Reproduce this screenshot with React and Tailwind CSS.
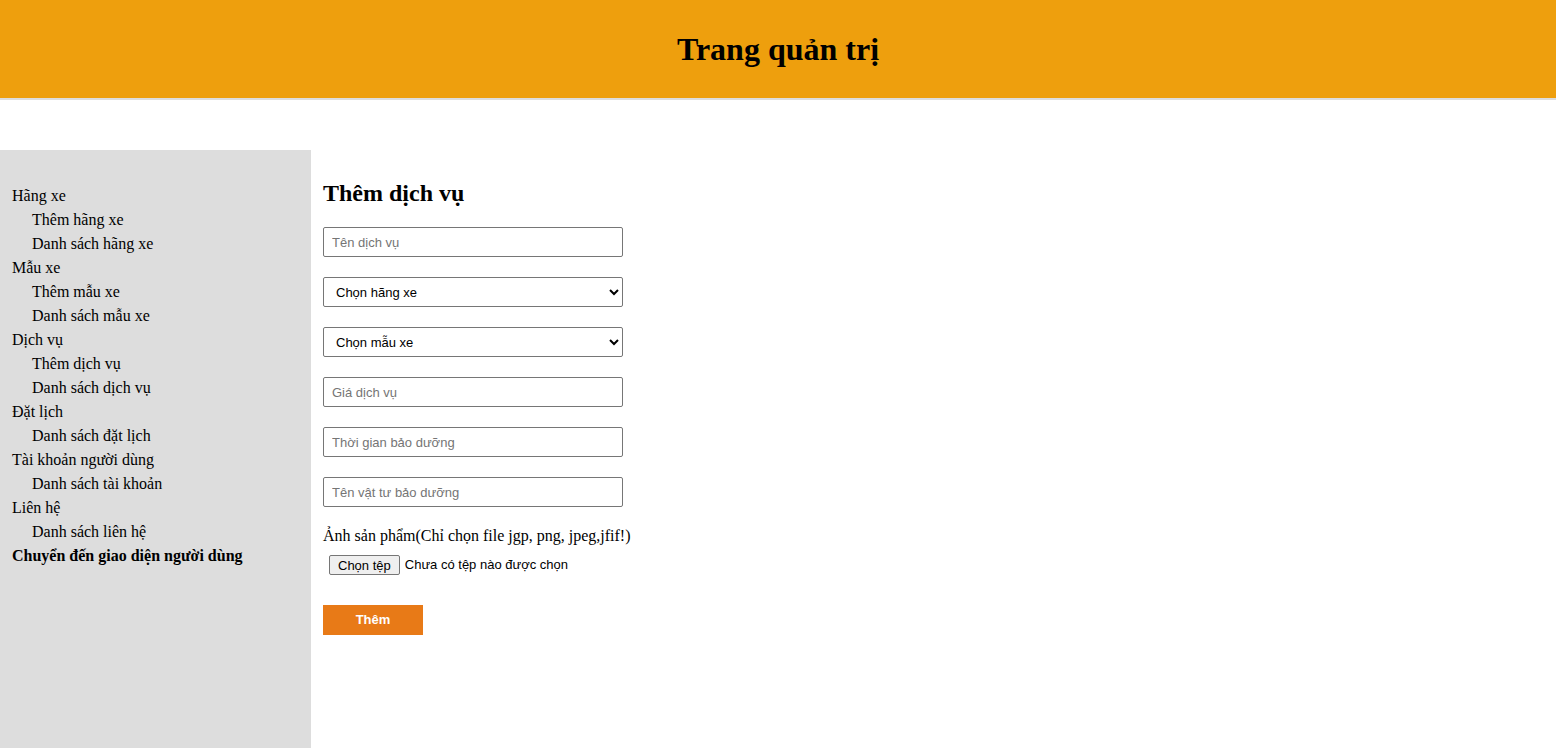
import { useState } from 'react';

const menu = [
  { label: 'Hãng xe', children: ['Thêm hãng xe', 'Danh sách hãng xe'] },
  { label: 'Mẫu xe', children: ['Thêm mẫu xe', 'Danh sách mẫu xe'] },
  { label: 'Dịch vụ', children: ['Thêm dịch vụ', 'Danh sách dịch vụ'] },
  { label: 'Đặt lịch', children: ['Danh sách đặt lịch'] },
  { label: 'Tài khoản người dùng', children: ['Danh sách tài khoản'] },
  { label: 'Liên hệ', children: ['Danh sách liên hệ'] },
];

const inputCls =
  "block w-[300px] h-[30px] px-2 border border-[#767676] rounded-[2px] text-[13px] text-black placeholder:text-[#757575] outline-none bg-white font-['Liberation_Sans',Arial,sans-serif]";

const App = () => {
  const [form, setForm] = useState({ ten: '', hang: '', mau: '', gia: '', thoigian: '', vattu: '' });
  const set = (k) => (e) => setForm({ ...form, [k]: e.target.value });

  return (
    <div className="min-h-screen flex flex-col bg-white font-['Liberation_Serif','Times_New_Roman',serif] text-black">
      <header className="h-[100px] bg-[#EE9F0D] border-b-2 border-[#dddddd] flex items-center justify-center">
        <h1 className="text-[32px] font-bold leading-none">Trang quản trị</h1>
      </header>

      <div className="flex flex-1 mt-[50px]">
        <aside className="w-[311px] bg-[#dddddd] pt-[34px] pl-3 text-[16px] leading-6">
          <ul>
            {menu.map((m) => (
              <li key={m.label}>
                <a className="cursor-pointer">{m.label}</a>
                <ul className="pl-5">
                  {m.children.map((c) => (
                    <li key={c}>
                      <a className="cursor-pointer">{c}</a>
                    </li>
                  ))}
                </ul>
              </li>
            ))}
            <li className="font-bold">
              <a className="cursor-pointer">Chuyển đến giao diện người dùng</a>
            </li>
          </ul>
        </aside>

        <main className="flex-1 pl-3 pt-[29px]">
          <h2 className="text-[24px] font-bold leading-7 mb-5">Thêm dịch vụ</h2>
          <form className="flex flex-col gap-5" onSubmit={(e) => e.preventDefault()}>
            <input className={inputCls} placeholder="Tên dịch vụ" value={form.ten} onChange={set('ten')} />
            <select className={inputCls} value={form.hang} onChange={set('hang')}>
              <option value="">Chọn hãng xe</option>
            </select>
            <select className={inputCls} value={form.mau} onChange={set('mau')}>
              <option value="">Chọn mẫu xe</option>
            </select>
            <input className={inputCls} placeholder="Giá dịch vụ" value={form.gia} onChange={set('gia')} />
            <input className={inputCls} placeholder="Thời gian bảo dưỡng" value={form.thoigian} onChange={set('thoigian')} />
            <input className={inputCls} placeholder="Tên vật tư bảo dưỡng" value={form.vattu} onChange={set('vattu')} />

            <div>
              <label className="block text-[16px] leading-[18px]">
                Ảnh sản phẩm(Chỉ chọn file jgp, png, jpeg,jfif!)
              </label>
              <div className="flex items-center mt-[10px] ml-[6px] font-['Liberation_Sans',Arial,sans-serif] text-[13px]">
                <button
                  type="button"
                  className="h-[20px] px-[8px] border border-[#767676] rounded-[2px] bg-[#efefef] leading-none"
                >
                  Chọn tệp
                </button>
                <span className="ml-[5px]">Chưa có tệp nào được chọn</span>
              </div>
            </div>

            <button
              type="submit"
              className="mt-[10px] w-[100px] h-[30px] bg-[#E87A17] text-white text-[13px] font-semibold font-['Liberation_Sans',Arial,sans-serif]"
            >
              Thêm
            </button>
          </form>
        </main>
      </div>
    </div>
  );
};

export default App;
